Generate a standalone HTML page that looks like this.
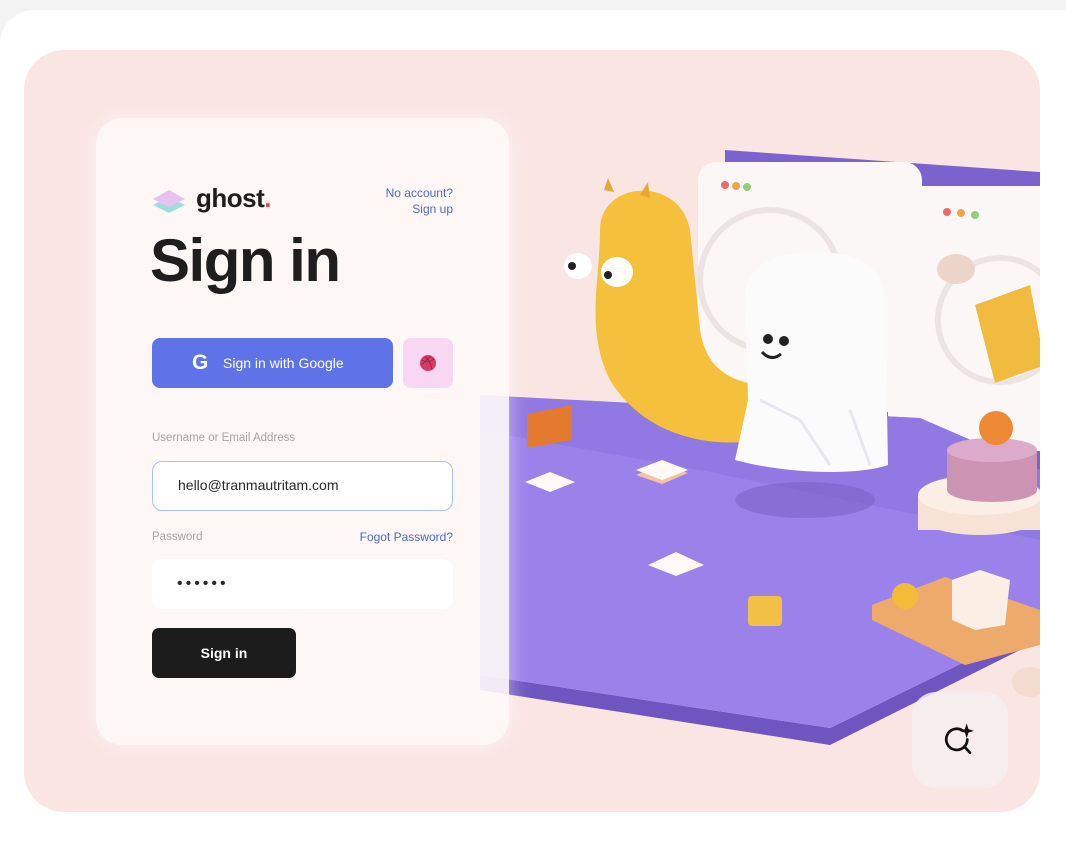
<!DOCTYPE html>
<html><head><meta charset="utf-8"><style>
*{margin:0;padding:0;box-sizing:border-box}
body{width:1066px;height:832px;background:#f3f3f3;font-family:"Liberation Sans",sans-serif;overflow:hidden;position:relative}
.white{position:absolute;left:0;top:10px;width:1100px;height:840px;background:#fff;border-radius:34px 0 0 0}
.card{position:absolute;left:24px;top:50px;width:1016px;height:762px;background:#f9e6e3;border-radius:40px;overflow:hidden}
.panel{position:absolute;left:96px;top:118px;width:413px;height:627px;background:rgba(253,248,247,0.92);border-radius:26px;box-shadow:0 0 20px rgba(255,255,255,.5)}
.abs{position:absolute}
.lbl{font-size:11.5px;color:#a9a3a3}
.inp{position:absolute;left:152px;width:301px;height:50px;background:#fff;border-radius:10px;font-size:14px;color:#2a2a2a;padding-left:25px;line-height:50px}
</style></head><body>
<div class="white"></div>
<div class="card">
<svg width="1016" height="762" style="position:absolute;left:0;top:0">
 <g transform="translate(-24,-50)">
  <polygon points="725,150 1040,172 1040,480 725,420" fill="#7b62cf"/>
  <rect x="698" y="162" width="224" height="250" rx="18" fill="#fbf7f7"/>
  <circle cx="770" cy="280" r="70" fill="none" stroke="#ece4e4" stroke-width="6"/>
  <circle cx="725" cy="185" r="4" fill="#ef6b6b"/><circle cx="736" cy="186" r="4" fill="#f1a54a"/><circle cx="747" cy="187" r="4" fill="#8cd178"/>
  <rect x="888" y="186" width="170" height="265" rx="18" fill="#fbf7f7"/>
  <circle cx="1000" cy="320" r="62" fill="none" stroke="#ece4e4" stroke-width="6"/>
  <circle cx="947" cy="212" r="4" fill="#ef6b6b"/><circle cx="961" cy="213" r="4" fill="#f1a54a"/><circle cx="975" cy="215" r="4" fill="#8cd178"/>
  <ellipse cx="956" cy="269" rx="19" ry="15" fill="#ecd4c8"/>
  <polygon points="975,305 1030,285 1045,365 995,383" fill="#f0bb3e"/>
  <polygon points="480,690 830,745 1040,640 1040,625 830,728 480,675" fill="#6e55c0"/>
  <polygon points="480,395 920,418 1040,470 1040,625 830,728 480,675" fill="#9b82ea"/>
  <polygon points="480,395 920,418 1040,470 1040,540 700,470 480,430" fill="#8a71dc" opacity=".6"/>
  <ellipse cx="805" cy="500" rx="70" ry="18" fill="#7a62c8" opacity=".6"/>
  <path d="M600,230 C600,180 680,175 690,230 L700,330 C705,360 720,380 760,385 L760,440 C700,450 640,430 610,380 C585,330 600,280 600,230Z" fill="#f5c03c"/>
  <path d="M604,190 L608,178 L614,192Z M640,195 L648,182 L650,198Z" fill="#e8a72e"/>
  <ellipse cx="578" cy="266" rx="14" ry="13" fill="#fff"/><circle cx="572" cy="266" r="4" fill="#222"/>
  <ellipse cx="617" cy="272" rx="16" ry="15" fill="#fff"/><circle cx="608" cy="275" r="4" fill="#222"/>
  <path d="M745,300 C745,265 775,252 815,252 C860,252 885,270 885,300 L888,465 C860,475 790,475 735,460 L748,400Z" fill="#fcfbfc"/>
  <path d="M760,400 L800,420 L830,465 M850,410 L870,465" stroke="#e8e6ee" stroke-width="3" fill="none"/>
  <circle cx="768" cy="339" r="5" fill="#222"/><circle cx="784" cy="341" r="5" fill="#222"/>
  <path d="M762,352 Q771,362 781,354" stroke="#222" stroke-width="3" fill="none"/>
  <ellipse cx="980" cy="515" rx="62" ry="20" fill="#f6e3d6"/>
  <rect x="918" y="495" width="124" height="35" fill="#f6e3d6"/>
  <ellipse cx="980" cy="495" rx="62" ry="20" fill="#fbefe5"/>
  <rect x="947" y="450" width="90" height="40" fill="#cc93b3"/>
  <ellipse cx="992" cy="490" rx="45" ry="12" fill="#cc93b3"/>
  <ellipse cx="992" cy="450" rx="45" ry="12" fill="#dcaacb"/>
  <circle cx="996" cy="428" r="17" fill="#ee8a35"/>
  <polygon points="527,414 572,405 572,440 527,448" fill="#e37a2e"/>
  <polygon points="525,482 550,472 575,482 550,492" fill="#fffaf5"/>
  <polygon points="636,475 662,464 688,473 662,484" fill="#f2c4a4"/>
  <polygon points="636,470 662,460 688,470 662,480" fill="#fffaf5"/>
  <polygon points="648,565 676,552 704,565 676,576" fill="#fffaf5"/>
  <rect x="748" y="596" width="34" height="30" rx="4" fill="#f2c044"/>
  <polygon points="872,605 945,577 1040,610 1040,645 965,665 872,620" fill="#eeaa6a"/>
  <circle cx="905" cy="596" r="13" fill="#f4bb3b"/>
  <polygon points="952,580 980,570 1010,580 1005,625 975,630 952,620" fill="#fbeee4"/>
  <ellipse cx="1030" cy="682" rx="18" ry="15" fill="#f3dccd"/>
 </g>
</svg>
<div class="abs" style="left:888px;top:642px;width:96px;height:96px;border-radius:24px;background:rgba(245,238,238,.85)"></div>
<svg class="abs" style="left:916px;top:670px" width="40" height="40" viewBox="0 0 36 36"><path d="M20.5,9.6 A9.5,9.5 0 1 0 24.6,17.5" stroke="#111" stroke-width="2.4" fill="none" stroke-linecap="round"/><path d="M22,24 L27,29.5" stroke="#111" stroke-width="2.4" stroke-linecap="round"/><path d="M24,3 L25.6,8.2 L30.5,9.8 L25.6,11.4 L24,16.5 L22.4,11.4 L17.5,9.8 L22.4,8.2Z" fill="#111"/></svg>
</div>
<div class="panel"></div>
<svg class="abs" style="left:150px;top:186px" width="38" height="32" viewBox="0 0 38 32"><polygon points="3,19 19,11 35,19 19,27" fill="#9fdcdc"/><polygon points="3,13 19,4 35,13 19,21" fill="#e7c1ef"/></svg>
<div class="abs" style="left:196px;top:183px;font-size:26px;font-weight:bold;color:#1e1e1e;letter-spacing:-0.5px">ghost<span style="color:#e5474b">.</span></div>
<div class="abs" style="left:350px;top:185px;width:103px;text-align:right;font-size:12px;line-height:16px;color:#4e6ad9">No account?<br>Sign up</div>
<div class="abs" style="left:150px;top:226px;font-size:60px;font-weight:bold;color:#1e1e1e;letter-spacing:-1.5px">Sign in</div>
<div class="abs" style="left:152px;top:338px;width:241px;height:50px;border-radius:8px;background:#5f73e8;color:#fff;font-size:14px;line-height:50px"><span style="position:absolute;left:40px;font-size:21px;font-weight:bold">G</span><span style="position:absolute;left:71px">Sign in with Google</span></div>
<div class="abs" style="left:403px;top:338px;width:50px;height:50px;border-radius:8px;background:#f7d7f2"><svg style="position:absolute;left:17px;top:17px" width="16" height="16" viewBox="0 0 16 16"><circle cx="8" cy="8" r="8" fill="#d83c66"/><path d="M2,5 Q8,9 14,4 M5,1 Q11,7 12,15 M1,10 Q6,6 11,1" stroke="#9c2447" stroke-width="0.9" fill="none"/></svg></div>
<div class="abs lbl" style="left:152px;top:432px">Username or Email Address</div>
<div class="inp" style="top:461px;border:1.5px solid #a9c4ee;line-height:47px">hello@tranmautritam.com</div>
<div class="abs lbl" style="left:152px;top:531px">Password</div>
<div class="abs" style="left:340px;top:530px;width:113px;text-align:right;font-size:12px;color:#4e6ad9">Fogot Password?</div>
<div class="inp" style="top:559px;letter-spacing:3px;font-size:16px">••••••</div>
<div class="abs" style="left:152px;top:628px;width:144px;height:50px;border-radius:7px;background:#1c1c1c;color:#fff;font-size:14px;font-weight:bold;text-align:center;line-height:50px">Sign in</div>
</body></html>
